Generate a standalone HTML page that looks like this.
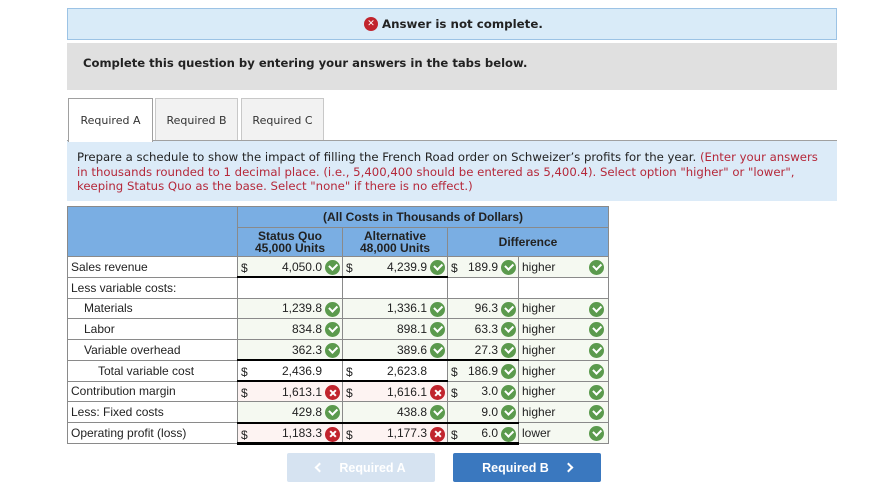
<!DOCTYPE html>
<html><head><meta charset="utf-8"><style>
*{box-sizing:border-box;margin:0;padding:0}
body{width:870px;height:491px;background:#fff;position:relative;font-family:"DejaVu Sans",Verdana,sans-serif;overflow:hidden}
.abs{position:absolute}
.banner{left:67px;top:8px;width:770px;height:32px;background:#d9ebf8;border:1px solid #9cc3e5;font-weight:bold;font-size:11.8px;color:#222;display:flex;align-items:center;padding-left:296px}
.gray{left:67px;top:43px;width:770px;height:47px;background:#e0e0e0;font-weight:bold;font-size:11.6px;color:#222;padding:13px 0 0 16px}
.tab{top:98px;height:43px;border:1px solid #c8c8c8;border-bottom:none;background:#f2f2f2;font-size:11px;color:#333;display:flex;align-items:center;justify-content:center}
.tabline{left:67px;top:140px;width:770px;height:1px;background:#a0a0a0}
.instr{left:67px;top:141px;width:770px;height:60px;background:#dcebf8;font-size:11.7px;line-height:14.6px;color:#222;padding:9px 10px}
.instr span{color:#b5283a}
table{position:absolute;left:67px;top:206px;border-collapse:collapse;font-family:"Liberation Sans",Arial,sans-serif;font-size:12px;color:#222;table-layout:fixed}
td{border:1px solid #8a8a8a;height:20.75px;padding:0 3px;white-space:nowrap;position:relative}
.h{background:#7aaee3;text-align:center;font-weight:bold;color:#222;line-height:12px}
.g{background:#f5f9f1}.r{background:#fdf3f2}
.num{text-align:right;padding-right:20px}
.d{position:absolute;left:3px;top:4px}
.ok,.x{position:absolute;right:2px;top:3px;width:15px;height:15px;border-radius:50%}
.ok{background:#5b9a4d}.x{background:#c1242d}
.ok:after{content:"";position:absolute;left:4px;top:3px;width:6px;height:3.5px;border-left:2px solid #fff;border-bottom:2px solid #fff;transform:rotate(-45deg)}
.x:before,.x:after{content:"";position:absolute;left:3.5px;top:6.5px;width:8px;height:2px;background:#fff;transform:rotate(45deg)}
.x:after{transform:rotate(-45deg)}
.ind{padding-left:16px}.ind2{padding-left:30px}
.tb{border-top:2px solid #000}
.bb{border-bottom:3px solid #000}
.btn{top:453px;width:148px;height:29px;color:#fff;font-family:"Liberation Sans",Arial,sans-serif;font-weight:bold;font-size:12.5px;display:flex;align-items:center;justify-content:center;border-radius:2px}
.chev{display:inline-block;width:7px;height:7px;border-top:2px solid #fff;border-right:2px solid #fff}
</style></head><body>
<div class="abs banner"><span style="display:inline-block;width:14px;height:14px;border-radius:50%;background:#c1242d;color:#fff;font-size:9px;line-height:14px;text-align:center;margin-right:4px">✕</span>Answer is not complete.</div>
<div class="abs gray">Complete this question by entering your answers in the tabs below.</div>
<div class="abs tab" style="left:68px;width:85px;background:#fff;border-color:#a0a0a0;height:44px;z-index:2">Required A</div>
<div class="abs tab" style="left:155px;width:83px">Required B</div>
<div class="abs tab" style="left:241px;width:83px">Required C</div>
<div class="abs tabline"></div>
<div class="abs instr">Prepare a schedule to show the impact of filling the French Road order on Schweizer’s profits for the year. <span>(Enter your answers in thousands rounded to 1 decimal place. (i.e., 5,400,400 should be entered as 5,400.4). Select option "higher" or "lower", keeping Status Quo as the base. Select "none" if there is no effect.)</span></div>
<table>
<colgroup><col style="width:170px"><col style="width:105px"><col style="width:105px"><col style="width:71px"><col style="width:90px"></colgroup>
<tr><td class="h" rowspan="2"></td><td class="h" colspan="4" style="height:21px">(All Costs in Thousands of Dollars)</td></tr>
<tr><td class="h" style="height:29px">Status Quo<br>45,000 Units</td><td class="h">Alternative<br>48,000 Units</td><td class="h" colspan="2">Difference</td></tr>
<tr><td>Sales revenue</td><td class="g num"><span class="d">$</span>4,050.0<i class="ok"></i></td><td class="g num"><span class="d">$</span>4,239.9<i class="ok"></i></td><td class="g num"><span class="d">$</span>189.9<i class="ok"></i></td><td class="g">higher<i class="ok" style="right:4px"></i></td></tr>
<tr><td>Less variable costs:</td><td class="tb"></td><td class="tb"></td><td></td><td></td></tr>
<tr><td class="ind">Materials</td><td class="g num">1,239.8<i class="ok"></i></td><td class="g num">1,336.1<i class="ok"></i></td><td class="g num">96.3<i class="ok"></i></td><td class="g">higher<i class="ok" style="right:4px"></i></td></tr>
<tr><td class="ind">Labor</td><td class="g num">834.8<i class="ok"></i></td><td class="g num">898.1<i class="ok"></i></td><td class="g num">63.3<i class="ok"></i></td><td class="g">higher<i class="ok" style="right:4px"></i></td></tr>
<tr><td class="ind">Variable overhead</td><td class="g num">362.3<i class="ok"></i></td><td class="g num">389.6<i class="ok"></i></td><td class="g num">27.3<i class="ok"></i></td><td class="g">higher<i class="ok" style="right:4px"></i></td></tr>
<tr><td class="ind2">Total variable cost</td><td class="num tb"><span class="d">$</span>2,436.9</td><td class="num tb"><span class="d">$</span>2,623.8</td><td class="g num tb"><span class="d">$</span>186.9<i class="ok"></i></td><td class="g">higher<i class="ok" style="right:4px"></i></td></tr>
<tr><td>Contribution margin</td><td class="r num tb"><span class="d">$</span>1,613.1<i class="x"></i></td><td class="r num tb"><span class="d">$</span>1,616.1<i class="x"></i></td><td class="g num"><span class="d">$</span>3.0<i class="ok"></i></td><td class="g">higher<i class="ok" style="right:4px"></i></td></tr>
<tr><td>Less: Fixed costs</td><td class="g num">429.8<i class="ok"></i></td><td class="g num">438.8<i class="ok"></i></td><td class="g num">9.0<i class="ok"></i></td><td class="g">higher<i class="ok" style="right:4px"></i></td></tr>
<tr><td>Operating profit (loss)</td><td class="r num tb bb"><span class="d">$</span>1,183.3<i class="x"></i></td><td class="r num tb bb"><span class="d">$</span>1,177.3<i class="x"></i></td><td class="g num tb bb"><span class="d">$</span>6.0<i class="ok"></i></td><td class="g">lower<i class="ok" style="right:4px"></i></td></tr>
</table>
<div class="abs btn" style="left:287px;background:#d6e3f1"><span class="chev" style="transform:rotate(-135deg);margin-right:16px"></span>Required A</div>
<div class="abs btn" style="left:453px;background:#3a78bf">Required B<span class="chev" style="transform:rotate(45deg);margin-left:16px"></span></div>
</body></html>
